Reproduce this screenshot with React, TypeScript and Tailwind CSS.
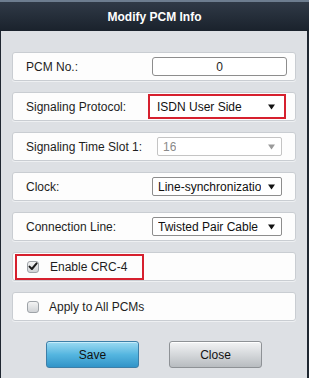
import React from 'react';

const font = { fontFamily: '"Liberation Sans", Arial, sans-serif' };

function Arrow({ muted = false }: { muted?: boolean }) {
  return (
    <svg width="7" height="6" viewBox="0 0 7 6" className="shrink-0">
      <path d="M0 0.5 H7 L3.5 5.5 Z" fill={muted ? '#9a9a9a' : '#111'} />
    </svg>
  );
}

function Row({ children, className = '' }: { children: React.ReactNode; className?: string }) {
  return (
    <div
      className={`flex items-center h-[29px] rounded-[3px] border border-[#c9cdd2] bg-[#fdfdfd] shadow-[0_1px_0_#eef0f2] ${className}`}
    >
      {children}
    </div>
  );
}

function Select({ value, muted = false, className = '' }: { value: string; muted?: boolean; className?: string }) {
  return (
    <div
      className={`flex items-center justify-between h-[19px] rounded-[2px] border bg-white pl-[5px] pr-[6px] ${
        muted ? 'border-[#c4c4c4] text-[#8a8a8a]' : 'border-[#8d8d8d] text-[#111]'
      } ${className}`}
    >
      <span className="whitespace-nowrap overflow-hidden">{value}</span>
      <Arrow muted={muted} />
    </div>
  );
}

function Check({ checked }: { checked: boolean }) {
  return (
    <div className="w-[12px] h-[12px] rounded-[3px] border border-[#9ea3a8] bg-gradient-to-b from-[#f4f4f4] to-[#d0d3d6] flex items-center justify-center">
      {checked && (
        <svg width="10" height="9" viewBox="0 0 10 9">
          <path d="M1.5 4.6 L3.9 7 L8.6 1.4" stroke="#1a1a1a" strokeWidth="2" fill="none" strokeLinecap="round" strokeLinejoin="round" />
        </svg>
      )}
    </div>
  );
}

export default function App() {
  return (
    <div className="w-[309px] h-[378px] flex flex-col text-[12px] text-[#1e1e1e] bg-[#1f2731]" style={font}>
      <div className="h-[31px] shrink-0 flex items-center justify-center border-t-2 border-[#6d7d8f] bg-gradient-to-b from-[#303a47] to-[#1a222c] text-white text-[12px] font-bold">
        Modify PCM Info
      </div>
      <div className="flex-1 ml-px mr-[2px] bg-[#dde0e4] pt-[21px] pl-[11px] pr-[11px] flex flex-col gap-[11px]">
        <Row className="pl-[13px] pr-[8px] justify-between">
          <span>PCM No.:</span>
          <div className="w-[135px] h-[19px] rounded-[3px] border border-[#8d8d8d] bg-white flex items-center justify-center">
            0
          </div>
        </Row>
        <Row className="pl-[13px] pr-[9px] justify-between">
          <span>Signaling Protocol:</span>
          <div className="w-[138px] h-[25px] border-2 border-[#d6202e] bg-white flex items-center justify-between pl-[7px] pr-[9px] text-[#111]">
            <span>ISDN User Side</span>
            <Arrow />
          </div>
        </Row>
        <Row className="pl-[13px] pr-[13px] justify-between">
          <span>Signaling Time Slot 1:</span>
          <Select value="16" muted className="w-[125px]" />
        </Row>
        <Row className="pl-[13px] pr-[13px] justify-between">
          <span>Clock:</span>
          <Select value="Line-synchronizatio" className="w-[130px]" />
        </Row>
        <Row className="pl-[13px] pr-[13px] justify-between">
          <span>Connection Line:</span>
          <Select value="Twisted Pair Cable" className="w-[130px]" />
        </Row>
        <Row className="pl-[2px]">
          <div className="w-[129px] h-[26px] border-2 border-[#d6202e] flex items-center pl-[10px] gap-[11px]">
            <Check checked />
            <span>Enable CRC-4</span>
          </div>
        </Row>
        <Row className="pl-[14px] gap-[10px]">
          <Check checked={false} />
          <span>Apply to All PCMs</span>
        </Row>
        <div className="flex justify-center gap-[30px] mt-[9px]">
          <button className="w-[93px] h-[27px] rounded-[3px] border border-[#3d7fa8] bg-gradient-to-b from-[#9adaf2] via-[#55b6e0] to-[#3194c8] text-[#111] text-[12px] shadow-[inset_0_1px_0_#c6ecfb]">
            Save
          </button>
          <button className="w-[93px] h-[27px] rounded-[3px] border border-[#8e9296] bg-gradient-to-b from-[#f3f4f5] via-[#d5d8db] to-[#b8bcc0] text-[#111] text-[12px] shadow-[inset_0_1px_0_#ffffff]">
            Close
          </button>
        </div>
      </div>
    </div>
  );
}
